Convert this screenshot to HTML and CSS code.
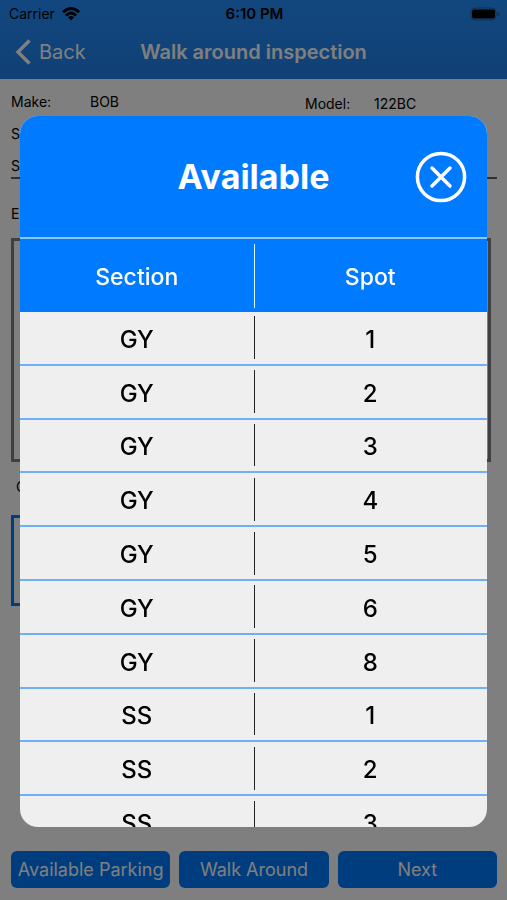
FILE: index.html
```
<!DOCTYPE html>
<html lang="en">
<head>
<meta charset="utf-8">
<meta name="viewport" content="width=device-width, initial-scale=1">
<title>Walk around inspection</title>
<link rel="stylesheet" href="styles.css">
</head>
<body>
<div class="app">
  <header class="top">
    <div class="status">
      <span class="carrier">Carrier
        <svg width="18" height="14" viewBox="0 0 18 14" aria-hidden="true"><g fill="none" stroke="#000" stroke-width="2.8"><path d="M1 5.2Q9-2.2 17 5.2"/><path d="M4 8.4Q9 3.6 14 8.4"/></g><path d="M9 13.4 6 10.2Q9 7.8 12 10.2Z"/></svg>
      </span>
      <span class="clock">6:10 PM</span>
      <svg class="battery" width="30" height="14" viewBox="0 0 30 14" aria-hidden="true"><rect x="1" y="1" width="25" height="12" rx="4" fill="none" stroke="#1c5fa6"/><rect x="2" y="2.500" width="23" height="9" rx="2"/><path d="M27.500 5v4q2-.6 2-2t-2-2" fill="#1c5fa6"/></svg>
    </div>
    <nav class="nav">
      <a class="back" href="#"><svg width="16" height="26" viewBox="0 0 16 26" aria-hidden="true"><path d="M14.500 1.500 3 13l11.500 11.500" fill="none" stroke="#fff" stroke-width="3.500"/></svg>Back</a>
      <h1>Walk around inspection</h1>
    </nav>
  </header>
  <main class="form">
    <dl class="vehicle">
      <dt>Make:</dt><dd>BOB</dd>
      <dt class="low">Model:</dt><dd class="low">122BC</dd>
    </dl>
    <p class="line">S</p>
    <p class="line ruled">S</p>
    <label class="notes-label" for="notes">E</label>
    <textarea class="notes" id="notes"></textarea>
    <label class="entry-label" for="entry">C</label>
    <input class="entry" id="entry" type="text">
  </main>
  <footer class="actions">
    <button type="button">Available Parking</button>
    <button type="button">Walk Around</button>
    <button type="button">Next</button>
  </footer>
</div>
<div class="overlay">
  <section class="dialog" role="dialog" aria-modal="true" aria-labelledby="dialog-title">
    <header class="dialog-head">
      <h2 id="dialog-title">Available</h2>
      <button class="close" type="button" aria-label="Close"><svg width="52" height="52" viewBox="0 0 52 52" aria-hidden="true"><g fill="none" stroke="#fff" stroke-width="3.500" stroke-linecap="round"><circle cx="26" cy="26" r="23.600"/><path d="m17 17 18 18M35 17 17 35"/></g></svg></button>
    </header>
    <div class="scroll">
      <table>
        <thead><tr><th scope="col">Section</th><th scope="col">Spot</th></tr></thead>
        <tbody>
          <tr><td>GY</td><td>1</td></tr>
          <tr><td>GY</td><td>2</td></tr>
          <tr><td>GY</td><td>3</td></tr>
          <tr><td>GY</td><td>4</td></tr>
          <tr><td>GY</td><td>5</td></tr>
          <tr><td>GY</td><td>6</td></tr>
          <tr><td>GY</td><td>8</td></tr>
          <tr><td>SS</td><td>1</td></tr>
          <tr><td>SS</td><td>2</td></tr>
          <tr><td>SS</td><td>3</td></tr>
        </tbody>
      </table>
    </div>
  </section>
</div>
</body>
</html>
```
FILE: styles.css
```
* { box-sizing: border-box; }

body {
  margin: 0;
  font-family: Inter, "Liberation Sans", sans-serif;
  color: #000;
  background: #fff;
}

h1, h2, p, dl, dd { margin: 0; }

button, input, textarea { font: inherit; }

.app {
  display: flex;
  flex-direction: column;
  min-height: 100vh;
}

.top {
  background: linear-gradient(#2490fe, #2080ea);
}

.status {
  display: grid;
  grid-template-columns: 1fr auto 1fr;
  align-items: center;
  height: 27px;
  padding: 0 7px 0 9px;
  font-size: 14px;
}

.carrier {
  display: flex;
  align-items: center;
  gap: 7px;
}

.clock {
  font-size: 15px;
  font-weight: 600;
}

.battery { justify-self: end; }

.nav {
  display: grid;
  grid-template-columns: 1fr auto 1fr;
  align-items: center;
  height: 50px;
  margin-bottom: 2px;
  padding: 0 15px;
  color: #fff;
}

.back {
  display: flex;
  align-items: center;
  gap: 8px;
  font-size: 20px;
  color: #fff;
  text-decoration: none;
}

.nav h1 {
  font-size: 20px;
  font-weight: 600;
}

.form {
  display: flex;
  flex: 1;
  flex-direction: column;
  padding: 13px 10px 0 11px;
  font-size: 14px;
  line-height: 20px;
}

.vehicle {
  display: grid;
  grid-template-columns: 79px 215px 69px 1fr;
  height: 32px;
}

.low { padding-top: 2px; }

.line { height: 32px; }

.ruled {
  height: 23px;
  border-bottom: 2px solid #606060;
}

.notes-label { margin-top: 25px; }

.notes {
  height: 224px;
  margin: 14px 6px 0 0;
  border: 3px solid #808080;
  background: #fff;
  resize: none;
}

.entry-label { margin: 15px 0 0 5px; }

.entry {
  height: 91px;
  margin: 18px 12px 0 0;
  border: 3px solid #007aff;
  background: #fff;
}

.actions {
  display: grid;
  grid-template-columns: 16fr 15fr 16fr;
  gap: 9px;
  padding: 12px 10px 12px 11px;
}

.actions button {
  height: 37px;
  padding: 0;
  border: 0;
  border-radius: 6px;
  background: #007aff;
  color: #fff;
  font-size: 18px;
  white-space: nowrap;
}

.overlay {
  position: fixed;
  inset: 0;
  display: flex;
  padding: 116px 20px 73px;
  background: rgba(0, 0, 0, 0.5);
}

.dialog {
  display: flex;
  flex: 1;
  flex-direction: column;
  overflow: hidden;
  border-radius: 18px;
  background: #efefef;
}

.dialog-head {
  display: grid;
  flex: none;
  grid-template-columns: 1fr auto 1fr;
  align-items: center;
  height: 123px;
  padding: 0 20px;
  border-bottom: 2px solid #8cc8ff;
  background: #007aff;
  color: #fff;
}

.dialog-head h2 {
  grid-column: 2;
  font-size: 34px;
  font-weight: 700;
}

.close {
  display: flex;
  justify-self: end;
  padding: 0;
  border: 0;
  background: none;
}

.scroll {
  flex: 1;
  min-height: 0;
  overflow: hidden;
}

table {
  width: 100%;
  height: 611px;
  table-layout: fixed;
  border-spacing: 0;
  font-size: 24px;
  text-align: center;
}

th {
  height: 73px;
  padding: 2px 0 0;
  background: #007aff;
  color: #fff;
  font-size: 23px;
  font-weight: 500;
}

td {
  padding: 3px 0 0;
  border-bottom: 2px solid #6eaff8;
  font-weight: 500;
}

th + th, td + td {
  background-image: linear-gradient(#222, #222);
  background-position: left center;
  background-repeat: no-repeat;
  background-size: 1px calc(100% - 9px);
}

th + th { background-image: linear-gradient(#d5ffff, #d5ffff); }
```
